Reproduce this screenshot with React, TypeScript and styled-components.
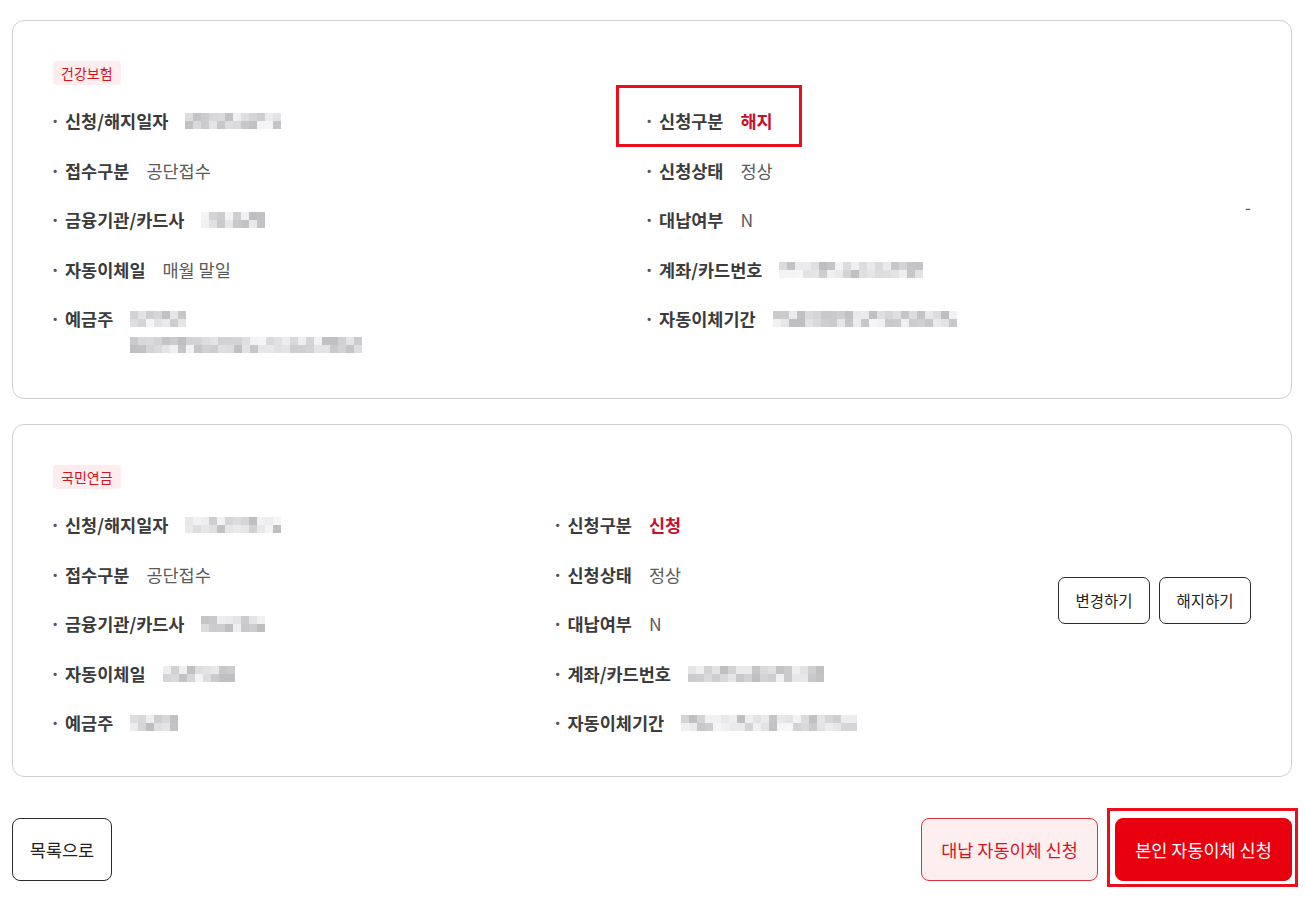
import React, { FunctionComponent } from "react";
import styled, { createGlobalStyle } from "styled-components";

const GlobalStyle = createGlobalStyle`
  body {
    margin: 0;
    background: #fff;
    font-family: "Noto Sans CJK KR", "Noto Sans", sans-serif;
    color: #333;
  }
  * {
    box-sizing: border-box;
  }
`;

const Page = styled.div`
  display: flex;
  flex-direction: column;
  gap: 25px;
  padding: 20px 13px 22px 12px;
`;

const Card = styled.section`
  position: relative;
  display: flex;
  align-items: center;
  padding: 40px 40px 41px 40px;
  border: 1px solid #cfcfcf;
  border-radius: 12px;
`;

const Info = styled.div`
  flex: 1;
  min-width: 0;
`;

const Tag = styled.div`
  display: flex;
  align-items: center;
  width: fit-content;
  height: 24px;
  margin-bottom: 24px;
  padding: 0 8px;
  border-radius: 4px;
  background: #fdedef;
  color: #d5131f;
  font-size: 14px;
  line-height: 24px;
`;

const Grid = styled.div`
  display: grid;
  grid-template-columns: 1fr 1fr;
  row-gap: 25.5px;
  align-items: start;
`;

const Item = styled.div`
  position: relative;
  display: flex;
  align-items: flex-start;
  font-size: 17.5px;
  line-height: 24px;
`;

const Bullet = styled.span`
  width: 15px;
  margin-left: -3px;
  flex: none;
  color: #555;
  font-weight: 700;
`;

const Label = styled.span`
  flex: none;
  margin-right: 17px;
  color: #3b3b3b;
  font-weight: 700;
`;

const Value = styled.span<{ $accent?: boolean }>`
  display: flex;
  flex-direction: column;
  gap: 2px;
  color: ${(p) => (p.$accent ? "#c8102e" : "#5a5a5a")};
  font-weight: ${(p) => (p.$accent ? 700 : 400)};
`;

const Highlight = styled.span`
  position: absolute;
  border: 3px solid #e8101c;
  pointer-events: none;
`;

const ItemHighlight = styled(Highlight)`
  left: -31px;
  top: -24px;
  width: 186px;
  height: 62px;
`;

const MosaicRow = styled.span`
  display: inline-flex;
  flex-wrap: wrap;
  align-content: center;
  height: 24px;
  padding-top: 4px;
  padding-bottom: 4px;
`;

const Cell = styled.span<{ $shade: number }>`
  width: 8px;
  height: 8px;
  background: ${(p) => `rgb(${p.$shade}, ${p.$shade}, ${p.$shade + 3})`};
`;

const Mosaic: FunctionComponent<{ width: number; seed: number }> = ({ width, seed }) => {
  const cols = Math.round(width / 8);
  const cells: number[] = [];
  let s = seed * 9301 + 49297;
  for (let i = 0; i < cols * 2; i++) {
    s = (s * 9301 + 49297) % 233280;
    const r = s / 233280;
    cells.push(Math.round(190 + r * 56));
  }
  return (
    <MosaicRow style={{ width: cols * 8 }}>
      {cells.map((c, i) => (
        <Cell key={i} $shade={c} />
      ))}
    </MosaicRow>
  );
};

const Actions = styled.div`
  flex: none;
  display: flex;
  align-items: center;
  gap: 9px;
`;

const Dash = styled.span`
  padding-left: 4px;
  margin-bottom: 6px;
  color: #555;
  font-size: 17px;
  line-height: 1;
`;

const SmallButton = styled.button`
  width: 92px;
  height: 47px;
  border: 1px solid #2a2a2a;
  border-radius: 7px;
  background: #fff;
  color: #222;
  font-family: inherit;
  font-size: 15.5px;
  cursor: pointer;
`;

const Footer = styled.div`
  display: flex;
  justify-content: space-between;
  align-items: center;
  margin-top: 16px;
`;

const FooterRight = styled.div`
  display: flex;
  gap: 17px;
`;

const BigButton = styled.button<{ $variant?: "outline" | "soft" | "solid" }>`
  height: 63px;
  padding: 0;
  border-radius: 8px;
  font-family: inherit;
  font-size: 17.5px;
  cursor: pointer;
  border: 1px solid
    ${(p) => (p.$variant === "solid" ? "#e8000f" : p.$variant === "soft" ? "#d9333d" : "#2a2a2a")};
  background: ${(p) => (p.$variant === "solid" ? "#e8000f" : p.$variant === "soft" ? "#fdeeef" : "#fff")};
  color: ${(p) => (p.$variant === "solid" ? "#fff" : p.$variant === "soft" ? "#d5131f" : "#222")};
`;

const ListButton = styled(BigButton)`
  width: 100px;
`;

const WideButton = styled(BigButton)`
  width: 177px;
`;

const Marked = styled.div`
  position: relative;
  display: flex;
`;

const ButtonHighlight = styled(Highlight)`
  left: -8px;
  top: -10px;
  right: -6px;
  bottom: -6px;
`;

type Field = {
  label: string;
  value?: string;
  blur?: number[];
  accent?: boolean;
  marked?: boolean;
};

const Row: FunctionComponent<{ field: Field; seed: number }> = ({ field, seed }) => (
  <Item>
    {field.marked && <ItemHighlight />}
    <Bullet>·</Bullet>
    <Label>{field.label}</Label>
    <Value $accent={field.accent}>
      {field.value}
      {field.blur?.map((w, i) => (
        <Mosaic key={i} width={w} seed={seed * 7 + i} />
      ))}
    </Value>
  </Item>
);

const health: Field[] = [
  { label: "신청/해지일자", blur: [96] },
  { label: "신청구분", value: "해지", accent: true, marked: true },
  { label: "접수구분", value: "공단접수" },
  { label: "신청상태", value: "정상" },
  { label: "금융기관/카드사", blur: [67] },
  { label: "대납여부", value: "N" },
  { label: "자동이체일", value: "매월 말일" },
  { label: "계좌/카드번호", blur: [140] },
  { label: "예금주", blur: [52, 233] },
  { label: "자동이체기간", blur: [180] },
];

const pension: Field[] = [
  { label: "신청/해지일자", blur: [98] },
  { label: "신청구분", value: "신청", accent: true },
  { label: "접수구분", value: "공단접수" },
  { label: "신청상태", value: "정상" },
  { label: "금융기관/카드사", blur: [67] },
  { label: "대납여부", value: "N" },
  { label: "자동이체일", blur: [70] },
  { label: "계좌/카드번호", blur: [133] },
  { label: "예금주", blur: [49] },
  { label: "자동이체기간", blur: [175] },
];

const App: FunctionComponent = () => (
  <>
    <GlobalStyle />
    <Page>
      <Card>
        <Info>
          <Tag>건강보험</Tag>
          <Grid>
            {health.map((f, i) => (
              <Row key={f.label} field={f} seed={i + 1} />
            ))}
          </Grid>
        </Info>
        <Actions>
          <Dash>-</Dash>
        </Actions>
      </Card>

      <Card>
        <Info>
          <Tag>국민연금</Tag>
          <Grid>
            {pension.map((f, i) => (
              <Row key={f.label} field={f} seed={i + 20} />
            ))}
          </Grid>
        </Info>
        <Actions>
          <SmallButton>변경하기</SmallButton>
          <SmallButton>해지하기</SmallButton>
        </Actions>
      </Card>

      <Footer>
        <ListButton $variant="outline">목록으로</ListButton>
        <FooterRight>
          <WideButton $variant="soft">대납 자동이체 신청</WideButton>
          <Marked>
            <ButtonHighlight />
            <WideButton $variant="solid">본인 자동이체 신청</WideButton>
          </Marked>
        </FooterRight>
      </Footer>
    </Page>
  </>
);

export default App;
